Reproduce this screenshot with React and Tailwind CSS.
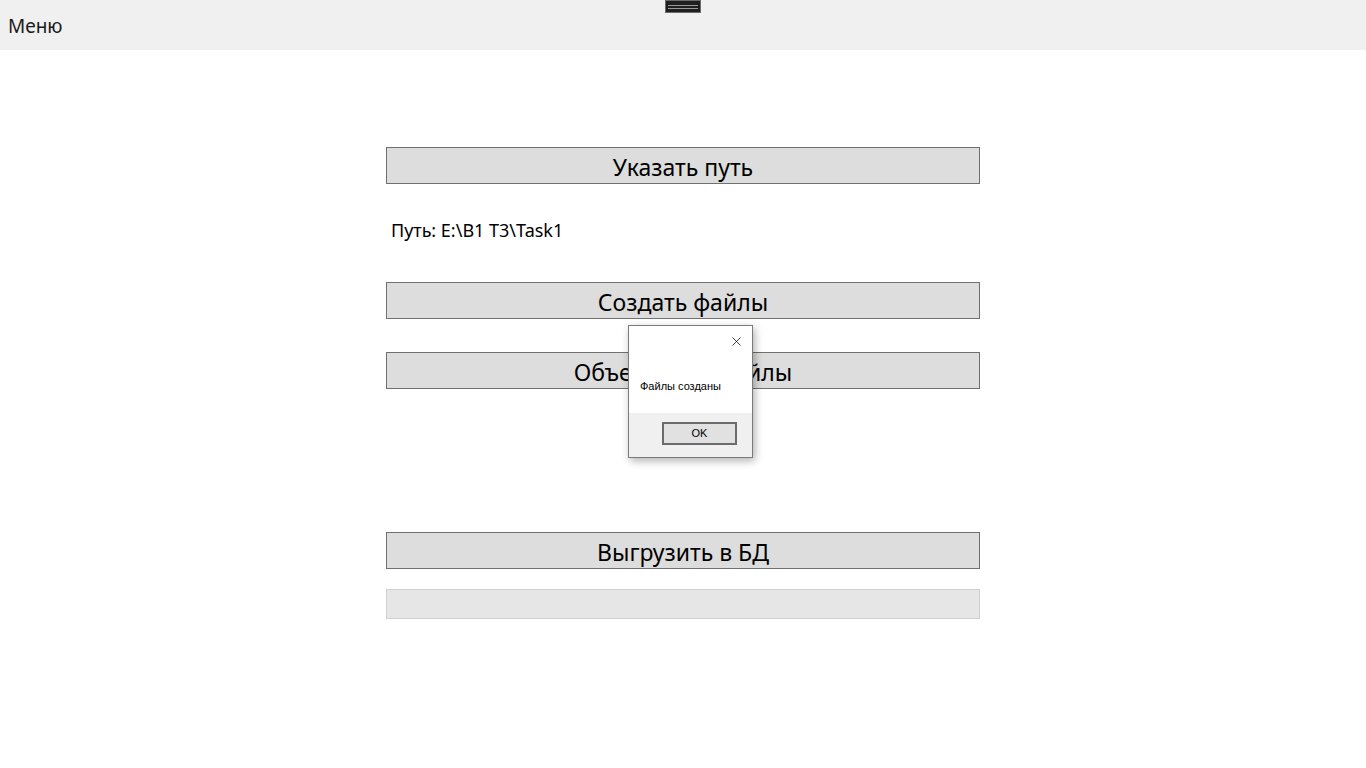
import { X } from 'lucide-react';

function WideButton({ children, className = '' }) {
  return (
    <button
      type="button"
      className={`w-[594px] h-[37px] border border-[#707070] bg-[#dddddd] text-[23px] leading-none text-black flex items-center justify-center pt-[4px] ${className}`}
    >
      {children}
    </button>
  );
}

export default function App() {
  return (
    <div className="relative w-[1366px] h-[768px] bg-white overflow-hidden font-['Noto_Sans',sans-serif] text-black">
      {/* Menu bar */}
      <div className="h-[50px] bg-[#f0f0f0] flex items-center px-[8px] pt-[2px]">
        <span className="text-[19px] text-[#1a1a1a]">Меню</span>
      </div>

      {/* Drag handle */}
      <div className="absolute left-[665px] top-0 w-[36px] h-[13px] bg-[#1f1f1f] border border-[#6b6b6b] flex flex-col items-center justify-center gap-[2px]">
        <div className="w-[30px] h-[1px] bg-[#9a9a9a]" />
        <div className="w-[30px] h-[1px] bg-[#9a9a9a]" />
      </div>

      {/* Content */}
      <div className="flex flex-col items-start pl-[386px] pt-[97px]">
        <WideButton>Указать путь</WideButton>
        <div className="mt-[34px] ml-[5px] text-[18px] leading-[24px]">Путь: E:\B1 T3\Task1</div>
        <WideButton className="mt-[40px]">Создать файлы</WideButton>
        <WideButton className="mt-[33px]">Объединить файлы</WideButton>
        <WideButton className="mt-[143px]">Выгрузить в БД</WideButton>
        <div className="mt-[20px] w-[594px] h-[30px] bg-[#e6e6e6] border border-[#d0d0d0]" />
      </div>

      {/* Message box */}
      <div className="absolute left-[628px] top-[325px] w-[125px] h-[133px] border border-[#7a7a7a] bg-white shadow-[2px_3px_8px_rgba(0,0,0,0.3)] flex flex-col">
        <div className="flex-1 flex flex-col">
          <div className="flex justify-end pr-[8px] pt-[8px]">
            <X size={15} strokeWidth={1.2} className="text-black" />
          </div>
          <div className="pl-[11px] pt-[32px] text-[11px] leading-none font-['Liberation_Sans',sans-serif]">
            Файлы созданы
          </div>
        </div>
        <div className="h-[44px] bg-[#f0f0f0] flex items-start pl-[33px] pt-[9px]">
          <button
            type="button"
            className="w-[75px] h-[23px] border-2 border-[#6b6b6b] bg-[#e1e1e1] text-[11px] leading-none flex items-center justify-center font-['Liberation_Sans',sans-serif]"
          >
            OK
          </button>
        </div>
      </div>
    </div>
  );
}
